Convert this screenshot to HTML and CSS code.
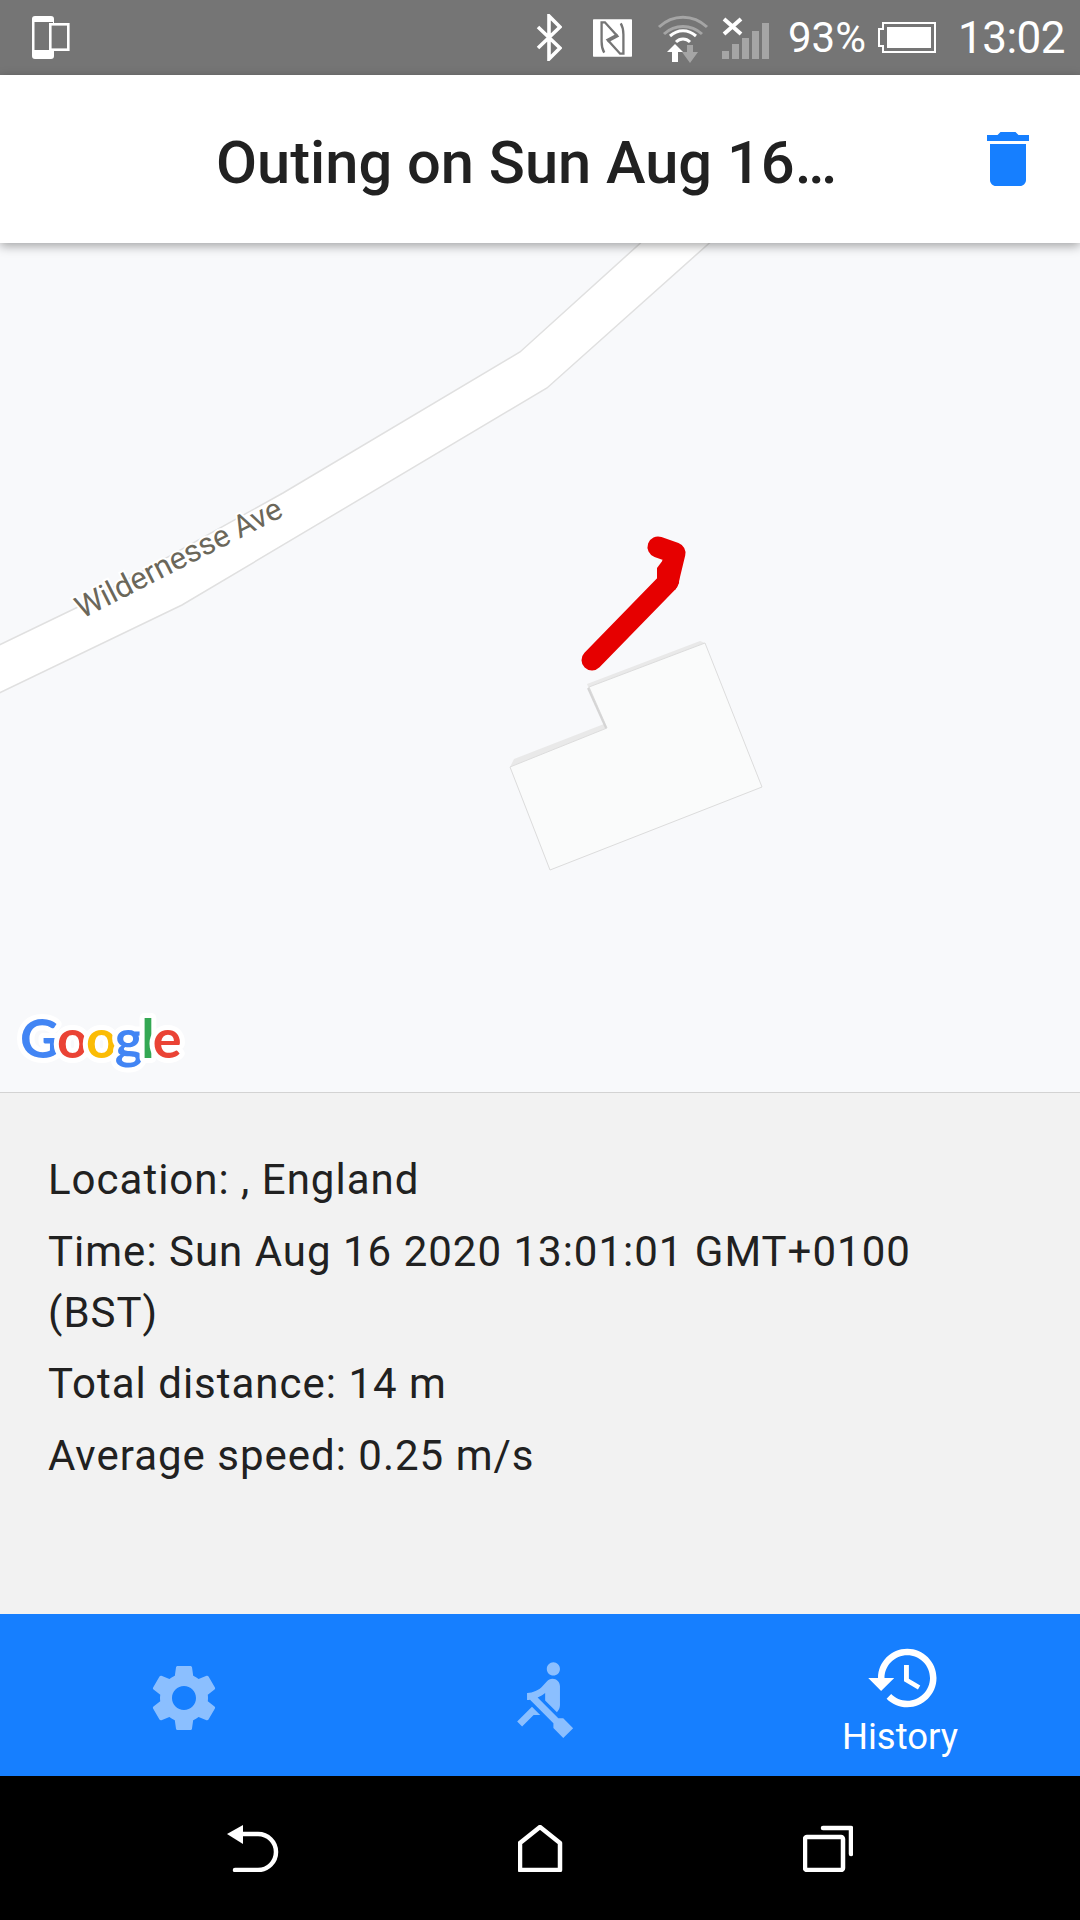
FILE: index.html
```html
<!DOCTYPE html>
<html lang="en">
<head>
  <meta charset="UTF-8" />
  <meta name="viewport" content="width=device-width, initial-scale=1.0"/>
  <title>Outing</title>
  <link rel="stylesheet" href="styles.css">
</head>
<body>
  <div class="status-bar">
    <svg class="st-phone" viewBox="12 6 40 46" width="40" height="46">
      <path fill-rule="evenodd" fill="#fff" d="M16 7h16a3 3 0 0 1 3 3v37a3 3 0 0 1-3 3H16a3 3 0 0 1-3-3V10a3 3 0 0 1 3-3zM15.500 13v28H34V13z"/>
      <rect x="31.300" y="15.300" width="18" height="25.400" fill="#757575" stroke="#fff" stroke-width="2.600"/>
    </svg>
    <svg class="st-bt" viewBox="0 0 26 47" width="26" height="47">
      <path d="M2 13l22 21-11 11V2l11 11L2 34" fill="none" stroke="#fff" stroke-width="3.600"/>
    </svg>
    <svg class="st-nfc" viewBox="12 15 118 113" width="39" height="38">
      <rect x="12" y="15" width="118" height="113" rx="2" fill="#fff"/>
      <g class="nfc-mark">
        <path d="M46 116C40 106 38 96 38 82V24H48L86 66L56 82"/>
        <path transform="rotate(180 71 71.500)" d="M46 116C40 106 38 96 38 82V24H48L86 66L56 82"/>
      </g>
    </svg>
    <svg class="st-wifi" viewBox="0 0 54 50" width="54" height="50">
      <path d="M3 14c14-13 34-13 48 0" fill="none" stroke="#a5a5a5" stroke-width="3"/>
      <path d="M8 21c11-10 27-10 38 0" fill="none" stroke="#a5a5a5" stroke-width="3"/>
      <path d="M14 23c8-7 18-7 26 0M20 29c4-4 10-4 14 0" fill="none" stroke="#fff" stroke-width="3"/>
      <path d="M11 39l8-8 8 8h-5v10h-6V39z" fill="#fff"/>
      <path d="M26 39h5v-7h6v7h5l-8 11z" fill="#a5a5a5"/>
    </svg>
    <svg class="st-signal" viewBox="0 0 47 44" width="47" height="44">
      <path d="M2 3l17 15M19 3L2 18" stroke="#fff" stroke-width="4"/>
      <rect x="0" y="35" width="7" height="8" fill="#a5a5a5"/>
      <rect x="10" y="28" width="7" height="15" fill="#a5a5a5"/>
      <rect x="20" y="22" width="7" height="21" fill="#a5a5a5"/>
      <rect x="30" y="15" width="7" height="28" fill="#a5a5a5"/>
      <rect x="40" y="7" width="7" height="36" fill="#a5a5a5"/>
    </svg>
    <span class="st-percent">93%</span>
    <svg class="st-battery" viewBox="0 0 58 33" width="58" height="33">
      <path d="M5 8V2h52v29H5v-6H1V8z" fill="none" stroke="#fff" stroke-width="2"/>
      <rect x="9" y="6" width="44" height="21" fill="#fff"/>
    </svg>
    <span class="st-time">13:02</span>
  </div>

  <div class="app-header">
    <h1 class="app-title">Outing on Sun Aug 16…</h1>
    <svg class="delete-icon" viewBox="0 0 24 24" width="72" height="72">
      <path d="M6 19c0 1.100.9 2 2 2h8c1.100 0 2-.9 2-2V7H6v12zM19 4h-3.500l-1-1h-5l-1 1H5v2h14V4z"/>
    </svg>
  </div>

  <div class="map">
    <svg class="map-canvas" viewBox="0 0 1080 849" width="1080" height="849">
      <!-- y here is page y minus 243 -->
      <path class="road" d="M646-5L520 109 283 250 78 364-5 404V452L182 362 547 145 715-5z"/>
      <text class="road-label" transform="translate(82 376) rotate(-27)">Wildernesse Ave</text>
      <path class="building-side" d="M705 400L589 444 607 485 510 524 514 516 604 481 587 441 700 398z"/>
      <path class="building" d="M705 400L762 544 550 627 510 524 607 485 589 444z"/>
      <path class="building-notch" d="M588 445L606 485"/>
      <polyline class="track" points="592,417 668,339 675,310 658,304"/>
      <polygon class="track-fill" points="657,337 657,325 663,317 680,317 679,340 675,347"/>
      <text class="google-logo" x="20" y="815"><tspan class="g-blue">G</tspan><tspan class="g-red">o</tspan><tspan class="g-yellow">o</tspan><tspan class="g-blue">g</tspan><tspan class="g-green">l</tspan><tspan class="g-red">e</tspan></text>
    </svg>
  </div>

  <div class="details">
    <p>Location: , England</p>
    <p>Time: Sun Aug 16 2020 13:01:01 GMT+0100 (BST)</p>
    <p>Total distance: 14 m</p>
    <p>Average speed: 0.25 m/s</p>
  </div>

  <div class="tab-bar">
    <div class="tab inactive">
      <svg viewBox="0 0 24 24" width="80" height="80">
        <path d="M19.140 12.940c.04-.3.06-.61.06-.94 0-.32-.02-.64-.07-.94l2.030-1.580c.18-.14.23-.41.12-.61l-1.920-3.320c-.12-.22-.37-.29-.59-.22l-2.390.96c-.5-.38-1.030-.7-1.620-.94L14.400 2.810c-.04-.24-.24-.41-.48-.41h-3.840c-.24 0-.43.17-.47.41L9.250 5.350C8.660 5.590 8.120 5.920 7.630 6.290L5.240 5.330c-.22-.08-.47 0-.59.22L2.740 8.870C2.620 9.080 2.660 9.340 2.860 9.480l2.030 1.580C4.840 11.360 4.800 11.690 4.800 12s.02.64.07.94l-2.030 1.580c-.18.14-.23.41-.12.61l1.920 3.320c.12.22.37.29.59.22l2.390-.96c.5.38 1.030.7 1.620.94l.36 2.540c.05.24.24.41.48.41h3.840c.24 0 .44-.17.47-.41l.36-2.540c.59-.24 1.130-.56 1.620-.94l2.390.96c.22.08.47 0 .59-.22l1.920-3.320c.12-.22.07-.47-.12-.61l-2.010-1.580zM12 15.600c-1.980 0-3.600-1.620-3.600-3.600s1.620-3.600 3.600-3.600 3.600 1.620 3.600 3.600-1.620 3.600-3.600 3.600z"/>
      </svg>
    </div>
    <div class="tab inactive">
      <svg viewBox="0 0 24 24" width="79" height="79">
        <path d="M8.500 14.500L4 19l1.500 1.500L9 17h2l-2.500-2.500zM15 1c-1.100 0-2 .9-2 2s.9 2 2 2 2-.9 2-2-.9-2-2-2zm6 20.010L18 24l-2.990-3.010V19.500l-7.100-7.090c-.31.05-.61.07-.91.07v-2.160c1.660.03 3.610-.87 4.670-2.040l1.400-1.550c.19-.21.43-.38.69-.5.29-.14.62-.23.96-.23h.03C15.990 6.010 17 7.020 17 8.260v5.750c0 .84-.35 1.610-.92 2.160l-3.580-3.580v-2.270c-.63.52-1.430 1.020-2.290 1.390L16.500 18H18l3 3.010z"/>
      </svg>
    </div>
    <div class="tab active">
      <svg viewBox="0 0 24 24" width="78" height="78">
        <path d="M13 3c-4.970 0-9 4.030-9 9H1l3.890 3.890.07.14L9 12H6c0-3.870 3.130-7 7-7s7 3.130 7 7-3.130 7-7 7c-1.930 0-3.680-.79-4.940-2.060l-1.420 1.420C8.270 19.990 10.510 21 13 21c4.970 0 9-4.030 9-9s-4.030-9-9-9zm-1 5v5l4.280 2.540.72-1.210-3.500-2.080V8H12z"/>
      </svg>
      <span class="tab-label">History</span>
    </div>
  </div>

  <div class="nav-bar">
    <svg viewBox="0 0 52 47" width="52" height="47">
      <path d="M12 9h19a18 18 0 0 1 0 36H8" fill="none" stroke="#fff" stroke-width="4.500" stroke-linecap="round"/>
      <path d="M0 9L16 0V19z" fill="#fff"/>
    </svg>
    <svg viewBox="0 0 46 47" width="46" height="47">
      <path d="M2 45V18L22 2l20 16v27z" fill="none" stroke="#fff" stroke-width="4.500" stroke-linejoin="round"/>
    </svg>
    <svg viewBox="0 0 50 47" width="50" height="47">
      <rect x="2" y="12" width="38" height="33" rx="2" fill="none" stroke="#fff" stroke-width="4.500"/>
      <path d="M20 3h28v26" fill="none" stroke="#fff" stroke-width="4.500" stroke-linecap="round" stroke-linejoin="round"/>
    </svg>
  </div>
</body>
</html>
```

FILE: styles.css
```css
body {
  font-family: 'Roboto', sans-serif;
  margin: 0;
  width: 1080px;
  height: 1920px;
  display: flex;
  flex-direction: column;
  overflow: hidden;
  background: #000;
}

/* status bar */
.status-bar {
  height: 75px;
  flex: none;
  background: #757575;
  display: flex;
  align-items: center;
  padding: 0 15px 0 31px;
  color: #fff;
}

.st-bt { margin-left: auto; }
.st-nfc { margin-left: 31px; }
.st-wifi { margin-left: 24px; }
.st-signal { margin-left: 12px; }
.st-battery { margin-left: 12px; }

.nfc-mark {
  fill: none;
  stroke: #757575;
  stroke-width: 7;
}

.st-percent {
  margin-left: 19px;
  font-size: 42px;
}

.st-time {
  margin-left: 22px;
  font-size: 44px;
  letter-spacing: -0.5px;
}

/* header */
.app-header {
  height: 168px;
  flex: none;
  background: #fff;
  display: flex;
  align-items: center;
  justify-content: space-between;
  padding: 0 36px 0 216px;
  box-shadow: 0 3px 10px rgba(0, 0, 0, 0.35);
  position: relative;
  z-index: 2;
}

.app-title {
  margin: 7px 0 0;
  font-size: 59.6px;
  font-weight: 500;
  color: #212121;
}

.delete-icon {
  fill: #167fff;
}

/* map */
.map {
  height: 850px;
  flex: none;
  box-sizing: border-box;
  background: #f8f9fb;
  border-bottom: 1px solid #d3d3d3;
  overflow: hidden;
}

.map-canvas {
  display: block;
}

.road {
  fill: #fff;
  stroke: #e0e0e0;
  stroke-width: 1.5;
}

.road-label {
  font-family: 'Roboto', sans-serif;
  font-size: 31px;
  fill: #6b675a;
  stroke: #fff;
  stroke-width: 4;
  paint-order: stroke;
}

.building {
  fill: #fafbfb;
  stroke: #dcdcdc;
  stroke-width: 1;
}

.building-side {
  fill: #e9e9e9;
}

.building-notch {
  stroke: #d5d5d5;
  stroke-width: 2;
}

.track {
  fill: none;
  stroke: #e60000;
  stroke-width: 21;
  stroke-linecap: round;
  stroke-linejoin: round;
}

.track-fill {
  fill: #e60000;
}

.google-logo {
  font-family: 'Lato', sans-serif;
  font-size: 54px;
  font-weight: 700;
  letter-spacing: -2px;
  stroke: #fff;
  stroke-width: 10;
  stroke-linejoin: round;
  paint-order: stroke;
}

.g-blue { fill: #4285f4; }
.g-red { fill: #ea4335; }
.g-yellow { fill: #fbbc05; }
.g-green { fill: #34a853; }

/* outing details */
.details {
  height: 521px;
  flex: none;
  box-sizing: border-box;
  background: #f2f2f2;
  padding: 56px 90px 0 48px;
  font-size: 42px;
  line-height: 61px;
  color: #212121;
  letter-spacing: 1px;
}

.details p {
  margin: 0 0 10.5px;
}

/* bottom tabs */
.tab-bar {
  height: 162px;
  flex: none;
  background: #167fff;
  display: grid;
  grid-template-columns: repeat(3, 1fr);
}

.tab {
  display: flex;
  flex-direction: column;
  align-items: center;
  justify-content: center;
  fill: #fff;
}

.tab.inactive {
  padding: 6px 0 0 7px;
}

.tab.inactive svg {
  opacity: 0.5;
}

.tab.active {
  justify-content: flex-start;
  padding-top: 25px;
}

.tab.active svg {
  margin-left: 7px;
}

.tab-label {
  color: #fff;
  font-size: 36.5px;
  line-height: 40px;
}

/* android nav */
.nav-bar {
  height: 144px;
  flex: none;
  background: #000;
  display: flex;
  align-items: center;
  justify-content: space-between;
  padding: 0 227px;
}
```
